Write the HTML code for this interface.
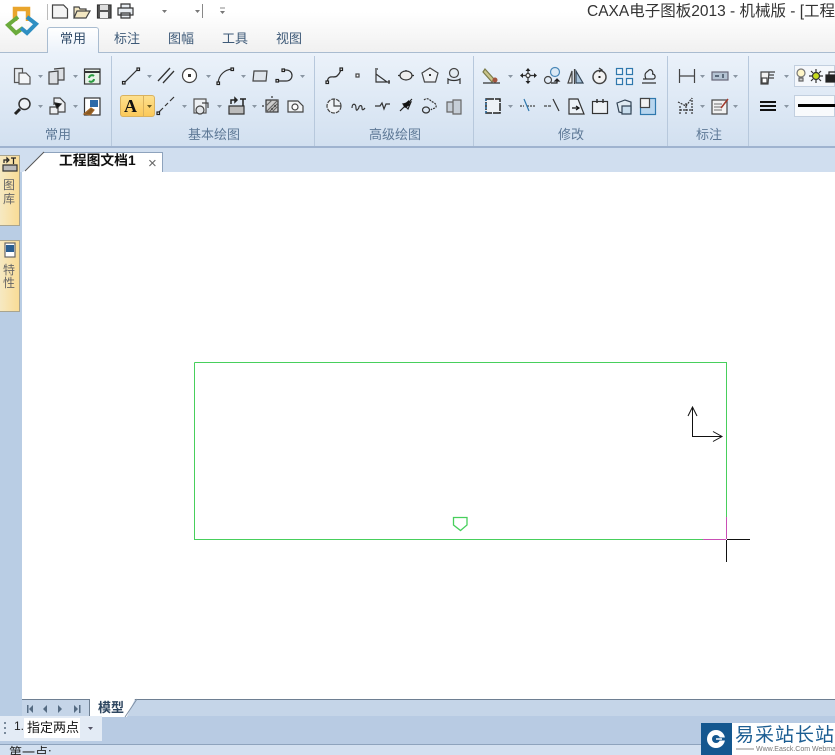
<!DOCTYPE html>
<html><head><meta charset="utf-8"><style>
html,body{margin:0;padding:0;background:#fff}
#r{position:relative;width:835px;height:755px;overflow:hidden;font-family:"Liberation Sans","Noto Sans CJK SC",sans-serif;background:#fff}
.a{position:absolute;white-space:nowrap}
.t{font-size:13px;color:#3e5a78;line-height:16px}
.g{font-size:13px;color:#5d7896;line-height:16px}
</style></head><body><div id="r">
<div class="a" style="left:0;top:0;width:835px;height:52px;background:linear-gradient(#fff 0,#fff 12px,#f1f1f1 50px)"></div>
<div class="a" style="left:0;top:52px;width:835px;height:94px;background:linear-gradient(#ebf2fa,#d2e0f0);border-top:1px solid #a9bcd0;box-sizing:border-box"></div>
<div class="a" style="left:0;top:146px;width:835px;height:26px;background:#d0deef;border-top:2px solid #9fb3cf;box-sizing:border-box"></div>
<div class="a" style="left:0;top:172px;width:22px;height:545px;background:#b9cde4"></div>
<div class="a" style="left:47px;top:27px;width:52px;height:26px;background:linear-gradient(#fff,#ebf2fa);border:1px solid #a9bcd0;border-bottom:none;border-radius:3px 3px 0 0;box-sizing:border-box"></div>
<div class="a t" style="left:60px;top:31px;color:#2f4a68">常用</div>
<div class="a t" style="left:114px;top:31px">标注</div>
<div class="a t" style="left:168px;top:31px">图幅</div>
<div class="a t" style="left:222px;top:31px">工具</div>
<div class="a t" style="left:276px;top:31px">视图</div>
<div class="a" style="left:587px;top:2px;font-size:15.5px;line-height:20px;color:#333">CAXA电子图板2013 - 机械版 - [工程图</div>
<div class="a g" style="left:45px;top:127px">常用</div>
<div class="a g" style="left:188px;top:127px">基本绘图</div>
<div class="a g" style="left:369px;top:127px">高级绘图</div>
<div class="a g" style="left:558px;top:127px">修改</div>
<div class="a g" style="left:696px;top:127px">标注</div>
<div class="a" style="left:120px;top:95px;width:35px;height:22px;background:linear-gradient(#fde08e,#fbc95a);border:1px solid #d9b25f;border-radius:3px;box-sizing:border-box"></div>
<div class="a" style="left:124px;top:96px;font:bold 18px/20px 'Liberation Serif',serif;color:#111">A</div>
<div class="a" style="left:794px;top:65px;width:41px;height:22px;background:#f4f7fb;border:1px solid #c2cfdf;box-sizing:border-box"></div>
<div class="a" style="left:794px;top:95px;width:41px;height:22px;background:#f8fafc;border:1px solid #c2cfdf;box-sizing:border-box"></div>
<div class="a" style="left:23px;top:152px;width:140px;height:20px;background:#fff;border:1px solid #8ea3bd;border-bottom:none;border-left:none;box-sizing:border-box;clip-path:polygon(21px 0,100% 0,100% 100%,0 100%)"></div>
<div class="a" style="left:59px;top:152px;font-size:13.8px;font-weight:bold;line-height:18px;color:#111">工程图文档1</div>
<div class="a" style="left:148px;top:155px;font-size:15px;line-height:18px;color:#666">×</div>
<div class="a" style="left:0;top:155px;width:20px;height:71px;background:linear-gradient(90deg,#f6e9c2,#f9dc96);border:1px solid #a8a48f;border-left:none;box-sizing:border-box"></div>
<div class="a" style="left:0;top:240px;width:20px;height:72px;background:linear-gradient(90deg,#f6e9c2,#f9dc96);border:1px solid #a8a48f;border-left:none;box-sizing:border-box"></div>
<div class="a" style="left:3px;top:178px;width:14px;font-size:12px;line-height:14px;color:#666">图<br>库</div>
<div class="a" style="left:3px;top:264px;width:14px;font-size:12px;line-height:13px;color:#666">特<br>性</div>
<div class="a" style="left:22px;top:699px;width:813px;height:18px;background:#c5d5e8;border-top:1px solid #6e7f92;box-sizing:border-box"></div>
<div class="a" style="left:0;top:716px;width:835px;height:29px;background:#b8cbe3"></div>
<div class="a" style="left:0;top:744px;width:835px;height:11px;background:#d3e0f0;border-top:1px solid #8ea3bd;box-sizing:border-box"></div>
<div class="a" style="left:89px;top:699px;width:46px;height:18px;background:#fff;clip-path:polygon(0 0,100% 0,82% 100%,0 100%);border-left:1px solid #6e7f92;box-sizing:border-box"></div>
<div class="a" style="left:98px;top:700px;font-size:13px;font-weight:bold;line-height:16px;color:#2e4660">模型</div>
<div class="a" style="left:0;top:716px;width:102px;height:25px;background:#e3ebf5"></div>
<div class="a" style="left:24px;top:718px;width:56px;height:20px;background:#fff"></div>
<div class="a" style="left:14px;top:718px;font-size:12px;line-height:16px;color:#222">1.</div>
<div class="a" style="left:27px;top:720px;font-size:13px;line-height:16px;color:#111">指定两点</div>
<div class="a" style="left:9px;top:745px;font-size:13px;line-height:16px;color:#222">第一点:</div>
<div class="a" style="left:701px;top:723px;width:134px;height:32px;background:#fff"></div>
<div class="a" style="left:701px;top:723px;width:31px;height:32px;background:#14578f"></div>
<div class="a" style="left:735px;top:724px;font-size:19px;line-height:24px;letter-spacing:1px;color:#1b5d92">易采站长站</div>
<div class="a" style="left:756px;top:746px;font-size:7px;line-height:8px;color:#777">Www.Easck.Com Webmaster</div>
<svg class="a" style="left:0;top:0" width="835" height="755" viewBox="0 0 835 755" fill="none" stroke="#222" stroke-width="1.2">
<!-- logo -->
<path d="M15 21V9h13v12" stroke="#e9a52c" stroke-width="4.500"/>
<path d="M18 17l-10 8 8 8 7-5" stroke="#6bab3c" stroke-width="4"/>
<path d="M27 17l9 7-9 9-6-5" stroke="#2f8fc2" stroke-width="4"/>
<!-- qat -->
<path d="M47.500 4v16" stroke="#bbb" stroke-width="1"/>
<path d="M52.500 5h11l4 4v9h-15z" fill="#f4f4f4" stroke="#444"/>
<path d="M74 18V7h5l1 2h6v2M74 18l3-7h13l-4 7z" fill="#f3e7c2" stroke="#444"/>
<rect x="97.500" y="5" width="13.500" height="13" fill="#555" stroke="#333"/><rect x="100" y="5" width="8" height="5" fill="#ddd" stroke="none"/><rect x="100" y="12" width="8" height="6" fill="#eee" stroke="none"/>
<path d="M121 4h9v4h-9zM118 8h15v7h-15zM121 13h9v5h-9z" fill="#e8edf2" stroke="#333"/>
<path d="M162 10h5l-2.500 3zM195 10h5l-2.500 3zM220 11h5l-2.500 3z" fill="#777" stroke="none"/><path d="M220 8h5M202.500 4v14" stroke="#888" stroke-width="1"/>
<!-- separators -->
<g stroke="#b7c8dc" stroke-width="1"><path d="M111.500 56v90M314.500 56v90M473.500 56v90M667.500 56v90M748.500 56v90"/></g>
<!-- carets -->
<g fill="#8a96a3" stroke="none"><path d="M38 75h5l-2.500 3zM73 75h5l-2.500 3zM38 105h5l-2.500 3zM73 105h5l-2.500 3zM147 75h5l-2.500 3zM206 75h5l-2.500 3zM241 75h5l-2.500 3zM300 75h5l-2.500 3zM182 105h5l-2.500 3zM217 105h5l-2.500 3zM252 105h5l-2.500 3zM508 75h5l-2.500 3zM508 105h5l-2.500 3zM700 75h5l-2.500 3zM733 75h5l-2.500 3zM700 105h5l-2.500 3zM733 105h5l-2.500 3zM784 75h5l-2.500 3zM784 105h5l-2.500 3z"/></g>
<path d="M147 105h5l-2.500 3z" fill="#6b5a20" stroke="none"/><path d="M143.500 96v20" stroke="#d9b25f" stroke-width="1"/>
<!-- group 1 -->
<path d="M14.500 68.500h8v14h-8z" fill="#e8ecf0" stroke="#555"/><path d="M19 73h7l4 4v7H19z" fill="#f4f6f8" stroke="#555"/>
<path d="M49 72l9-1v13h-9zM54 69l10-1v12h-6" fill="#dde0e4" stroke="#444"/>
<rect x="84.500" y="69" width="15.500" height="15" fill="#e8f2e8" stroke="#333"/><path d="M84 72h16" stroke="#333" stroke-width="2"/><path d="M89 78a3 3 0 0 1 5-2M94 79a3 3 0 0 1-5 2" stroke="#2a9a40" stroke-width="2"/>
<circle cx="24.500" cy="104" r="5.500" fill="#eef2f6" stroke="#333" stroke-width="1.500"/><path d="M20 109l-5 5" stroke="#222" stroke-width="3"/>
<path d="M50 107h8v7h-8zM54 105v-7h6l5 5v9h-7" fill="#eef0f3" stroke="#444"/><path d="M55 103l6 1-4 4z" fill="#111"/>
<rect x="84.500" y="98" width="15.500" height="17" fill="#fff" stroke="#333"/><rect x="90" y="100" width="8" height="7" fill="#2c6aa8" stroke="none"/><path d="M84 114l7-6 3 2-4 5z" fill="#8a5a20" stroke="#a0662a"/>
<!-- group 2 row 1 -->
<path d="M124 83l14-14" stroke="#333"/><rect x="122.500" y="81.500" width="2.500" height="2.500" fill="#fff"/><rect x="137" y="68" width="2.500" height="2.500" fill="#fff"/>
<path d="M158 81l12-13M163 83l11-12" stroke="#333" stroke-width="1.300"/>
<circle cx="189.500" cy="75.500" r="7" fill="#fff" stroke="#444"/><rect x="188" y="74" width="3" height="3" fill="#333" stroke="none"/>
<path d="M218 83c1-8 6-13 14-14" stroke="#333"/><rect x="217" y="82" width="2.500" height="2.500" fill="#fff"/><rect x="231" y="68" width="2.500" height="2.500" fill="#fff"/>
<path d="M254 71h13l-1 10h-13z" fill="#dfe5ec" stroke="#444"/>
<path d="M277 81h9c8 0 8-11 0-11h-2" stroke="#333"/><rect x="276" y="79.500" width="2.500" height="2.500" fill="#fff"/><rect x="282" y="69" width="2.500" height="2.500" fill="#fff"/>
<!-- row 2 -->
<path d="M158 113l5-5M165 106l3-3M170 101l4-4" stroke="#333"/><rect x="157" y="112" width="2.500" height="2.500" fill="#fff"/>
<path d="M194 99h12v14h-12z" fill="#eef1f4" stroke="#555"/><circle cx="200" cy="110" r="4" fill="#e3e6ea" stroke="#444"/><path d="M202 103h6v5" stroke="#444"/>
<path d="M229 106h15v8h-15z" fill="#bbb" stroke="#333"/><path d="M231 104v-4h4M237 100l-2-2v4zM240 99h6M243 99v7" stroke="#222" stroke-width="1.500"/>
<rect x="266" y="100" width="12" height="12" fill="#ccc" stroke="#333"/><path d="M266 112l12-12M269 112l9-9M266 106l6-6M272 112l6-6" stroke="#666"/><path d="M272 96v20M262 106h20" stroke="#333" stroke-dasharray="2 10"/>
<path d="M288 101h10l5 5v6h-15z" fill="#f1f3f5" stroke="#444"/><circle cx="295" cy="107" r="3" fill="#fff" stroke="#444"/>
<!-- group 3 row 1 -->
<path d="M327 83c1-10 7-4 10-7 2-2 3-3 4-7" stroke="#333" stroke-width="1.300"/><rect x="326" y="81" width="2.500" height="2.500" fill="#fff"/><rect x="340" y="68" width="2.500" height="2.500" fill="#fff"/>
<rect x="356" y="74" width="3" height="3" fill="#fff" stroke="#444"/>
<path d="M376 70v12h14M376 74l11 8" stroke="#333"/><path d="M375 69h3M389 80v4" stroke="#333"/>
<ellipse cx="406" cy="75.500" rx="6" ry="4.500" fill="#eee" stroke="#333"/><path d="M398 75.500h2M412 75.500h2M406 70v1" stroke="#333"/>
<path d="M430 68l8 5-2.500 9h-11l-2.500-9z" fill="#eef1f5" stroke="#444"/><rect x="429" y="74" width="2" height="2" fill="#333" stroke="none"/>
<circle cx="454" cy="73" r="4.500" fill="#e4ebf2" stroke="#444"/><path d="M448 84v-5c3 2 9 2 12 0v5" stroke="#333"/>
<!-- row 2 -->
<circle cx="334" cy="106" r="7" fill="#f0f3f6" stroke="#444" stroke-dasharray="4 1"/><path d="M334 99v7h7" stroke="#444"/>
<path d="M352 108c0-5 4-5 4 0s3 0 3-1 3-3 3 1 3 0 3 0" stroke="#333"/>
<path d="M375 106h5l2-3 2 6 2-5h4" stroke="#333"/>
<path d="M400 111l12-12M403 104l5 5 3-7z" stroke="#222"/><path d="M403 105l6-5 1 5-5 3z" fill="#111" stroke="none"/>
<path d="M424 100c3-3 6 0 7 1s6 2 5 6c-1 2-4 1-5 3" stroke="#333" stroke-dasharray="2 1"/><ellipse cx="426" cy="110" rx="3.500" ry="3" stroke="#333"/>
<path d="M447 102h6v10h-6zM453 100h8v14h-8z" fill="#c6ced7" stroke="#666"/>
<!-- group 4 row 1 -->
<path d="M485 69l9 10-2 3-9-10z" fill="#c9c48a" stroke="#7a7a4a"/><circle cx="495" cy="80" r="2.500" fill="#a2553f" stroke="none"/><path d="M483 83h17" stroke="#333"/>
<path d="M528 69v13M522 75.500h13" stroke="#333"/><path d="M528 68l-2.500 3h5zM528 84l-2.500-3h5zM520 75.500l3-2.500v5zM537 75.500l-3-2.500v5z" fill="#222" stroke="none"/><circle cx="528" cy="75.500" r="2" fill="#fff" stroke="#333"/>
<circle cx="548" cy="80" r="3.500" stroke="#444"/><circle cx="555" cy="72" r="4.500" fill="#dbe9f5" stroke="#4a88b8"/><path d="M551 83h6v-3M557 79l-2 2h4z" stroke="#222"/>
<path d="M574.500 69v15" stroke="#444"/><path d="M572 71l-4 12h4z" fill="#eee" stroke="#444"/><path d="M576 71l7 12h-7z" fill="#a8c4dc" stroke="#345"/>
<circle cx="599.500" cy="77" r="6.500" fill="#f2f2f2" stroke="#444" stroke-width="1.500"/><rect x="598.500" y="76" width="2" height="2" fill="#222" stroke="none"/><path d="M599 68l3 2-3 2" stroke="#333"/>
<g stroke="#2f78ad" fill="#f1f6fb"><rect x="616.500" y="68.500" width="6" height="6"/><rect x="626.500" y="68.500" width="6" height="6"/><rect x="616.500" y="78.500" width="6" height="6"/><rect x="626.500" y="78.500" width="6" height="6"/></g>
<path d="M642 83h14M643 79h3c-3-7 2-7 3-9 3-2 5 4 3 4 4 0 4 5 1 5h-10" stroke="#333"/>
<!-- row 2 -->
<rect x="486" y="99" width="14" height="14" fill="#eef2f6" stroke="#222" stroke-width="1.500" stroke-dasharray="8 1"/><path d="M486 99v14" stroke="#1f6fb0" stroke-dasharray="2 2"/>
<path d="M520 106h4M527 106h9" stroke="#444" stroke-dasharray="2 1"/><path d="M524 99l5 12" stroke="#2f78ad"/>
<path d="M544 106h8" stroke="#444" stroke-dasharray="3 1"/><path d="M553 99l6 12" stroke="#333"/>
<path d="M569 99h9l6 15h-15z" fill="#eef3f8" stroke="#333"/><path d="M572 108h6M576 106l3 2-3 2" stroke="#111"/>
<rect x="592.500" y="101.500" width="15" height="12" fill="#eef2f6" stroke="#333"/><path d="M597 99v4M603 99v4" stroke="#333" stroke-width="1.500"/>
<path d="M617 103l8-3 6 2v9l-5 3-7-2z" fill="#dfeaf2" stroke="#345"/><path d="M622 106h9v8h-9z" fill="#c8dded" stroke="#345"/>
<rect x="640.500" y="98.500" width="15" height="16" fill="#b8d6ef" stroke="#2f78ad"/><rect x="640.500" y="98.500" width="9" height="9" fill="#f2f2f2" stroke="#444"/>
<!-- group 5 -->
<path d="M679.500 69v14M694.500 69v14M679 76h15" stroke="#444"/>
<rect x="712" y="72" width="16" height="8" fill="#b4c3d3" stroke="#667"/><path d="M715 76h4M723 74v4" stroke="#234"/>
<path d="M680 114v-8M686 114v-12M692 114v-16M680 110h13M678 102l8 4 6-8" stroke="#333" stroke-dasharray="2 1"/>
<rect x="712" y="100" width="15" height="14" fill="#f2f2f2" stroke="#444"/><path d="M714 104h8M714 107h8M714 110h8" stroke="#888"/><path d="M721 108l7-9" stroke="#a23a2c" stroke-width="1.500"/>
<!-- group 6 -->
<path d="M761 72h8l-1 12h-7zM769 72h6M769 75h5M769 78h5" fill="#f2f2f2" stroke="#444"/><rect x="762" y="78" width="5" height="5" fill="#fff" stroke="#444"/>
<path d="M760 102h16M760 106h16M760 110h16" stroke="#111" stroke-width="2"/>
<circle cx="801" cy="73" r="4" fill="#fff6c8" stroke="#777"/><path d="M799 78h4v3h-4z" fill="#ccc" stroke="#666"/>
<circle cx="816" cy="76" r="3.500" fill="#c7dc1f" stroke="#333"/><path d="M816 69v3M816 80v3M809 76h3M820 76h3M811 71l2 2M821 71l-2 2M811 81l2-2M821 81l-2-2" stroke="#333"/>
<rect x="826" y="75" width="9" height="7" fill="#222" stroke="#222"/><path d="M829 75v-3h6" stroke="#222"/>
<path d="M798 105.500h37" stroke="#000" stroke-width="3"/>
<!-- doc tab diagonal -->
<path d="M25 171l19-19" stroke="#555" stroke-width="1"/>
<!-- sidebar icons -->
<path d="M3 165h14v6H3z" fill="#bbb" stroke="#333"/><path d="M4 163v-3h3M9 160l-2-2v4zM11 158h5M13.500 158v6" stroke="#222"/>
<rect x="5" y="243" width="10" height="14" fill="#fff" stroke="#666"/><rect x="6" y="245" width="8" height="7" fill="#2a5f92" stroke="none"/>
<!-- nav -->
<g fill="#556b82" stroke="none"><path d="M27 705v8h1.500v-8zM33 705l-4 4 4 4zM47 705l-4 4 4 4zM58 705l4 4-4 4zM74 705l4 4-4 4zM79 705v8h1.500v-8z"/></g>
<path d="M125 717l12-18" stroke="#7d8fa4" stroke-width="1"/>
<path d="M5 722v2M5 727v2M5 732v2" stroke="#7a8a9b" stroke-width="2"/>
<path d="M88 727h5l-2.500 3z" fill="#556" stroke="none"/>
<!-- logo watermark mark -->
<circle cx="716" cy="739" r="9" fill="#fff" stroke="none"/><circle cx="716" cy="739" r="4" fill="#14578f" stroke="none"/><path d="M716 739h9" stroke="#14578f" stroke-width="3"/><path d="M716 739h6" stroke="#fff" stroke-width="1.500"/>
<path d="M736 749h18" stroke="#888" stroke-width="1"/>
<!-- drawing -->
<g stroke-width="1">
<path d="M194.500 362.500H726.500V517M194.500 362.500V539.500H703" stroke="#47cf5c"/>
<path d="M726.500 517V539M703 539.500H726" stroke="#c94fb5"/>
<path d="M727 539.500H750M726.500 540V562" stroke="#111"/>
<path d="M692.500 407V436.500H722M688 416l4.500-9 4.500 9M713 431.500l9 5-9 5" stroke="#111"/>
<path d="M453.500 517.500h13.500v7.500l-6.500 5.500-7-5.500z" stroke="#47cf5c" stroke-width="1.300"/>
</g>
</svg>
</div></body></html>
